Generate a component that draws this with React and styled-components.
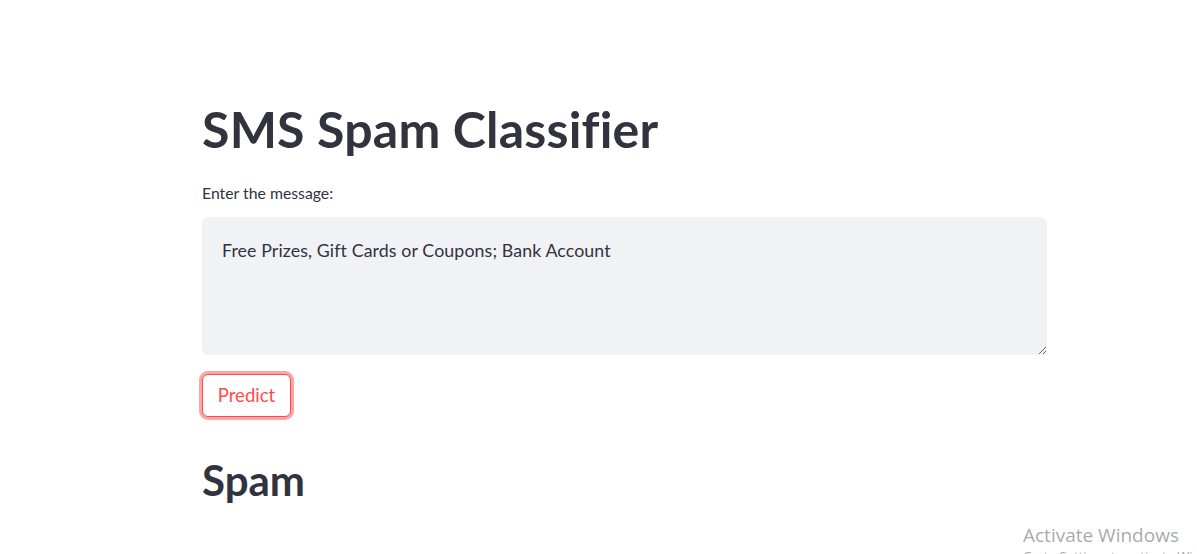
import React, { useState } from 'react';
import styled, { createGlobalStyle } from 'styled-components';

const GlobalStyle = createGlobalStyle`
  html, body {
    margin: 0;
    padding: 0;
    background: #ffffff;
    font-family: Lato, "Noto Sans", sans-serif;
    color: rgb(49, 51, 63);
  }
`

const Page = styled.div`
  position: relative;
  width: 1197px;
  height: 554px;
  overflow: hidden;
`

const Main = styled.main`
  width: 845px;
  padding: 99px 0 0 202px;
  display: flex;
  flex-direction: column;
`

const Title = styled.h1`
  margin: 0;
  font-size: 50px;
  font-weight: 700;
  letter-spacing: 0.2px;
  line-height: 1.2;
  padding: 0 0 25px;
`

const Label = styled.label`
  font-size: 15.8px;
  margin-bottom: 14px;
  line-height: 1.2;
`

const TextArea = styled.textarea`
  box-sizing: border-box;
  width: 845px;
  height: 138px;
  border: none;
  outline: none;
  border-radius: 6px;
  background: #f0f2f6;
  color: rgb(49, 51, 63);
  font-family: Lato, "Noto Sans", sans-serif;
  font-size: 17.8px;
  letter-spacing: 0.1px;
  padding: 22px 20px;
  resize: vertical;
`

const Button = styled.button`
  align-self: flex-start;
  margin-top: 19px;
  box-sizing: border-box;
  width: 89px;
  height: 43px;
  border-radius: 6px;
  border: 1px solid rgb(255, 75, 75);
  box-shadow: 0 0 0 3px rgba(255, 75, 75, 0.5);
  background: #ffffff;
  color: rgb(255, 75, 75);
  font-family: Lato, "Noto Sans", sans-serif;
  font-size: 18.5px;
  cursor: pointer;
`

const Result = styled.h2`
  margin: 38px 0 0;
  font-size: 42px;
  font-weight: 700;
  line-height: 1.2;
`

const Watermark = styled.div`
  position: absolute;
  left: 1023px;
  top: 524px;
  color: rgba(140, 140, 140, 0.75);
  font-family: "Open Sans", "Noto Sans", sans-serif;
  line-height: 1.25;
`

const WatermarkTitle = styled.div`
  font-size: 19px;
`

const WatermarkSub = styled.div`
  font-size: 13px;
  white-space: nowrap;
`

export default function App() {
  const [message, setMessage] = useState("Free Prizes, Gift Cards or Coupons; Bank Account")

  return (
    <Page>
      <GlobalStyle />
      <Main>
        <Title>SMS Spam Classifier</Title>
        <Label htmlFor="msg">Enter the message:</Label>
        <TextArea id="msg" value={message} onChange={(e) => setMessage(e.target.value)} />
        <Button>Predict</Button>
        <Result>Spam</Result>
      </Main>
      <Watermark>
        <WatermarkTitle>Activate Windows</WatermarkTitle>
        <WatermarkSub>Go to Settings to activate Windows.</WatermarkSub>
      </Watermark>
    </Page>
  );
}
